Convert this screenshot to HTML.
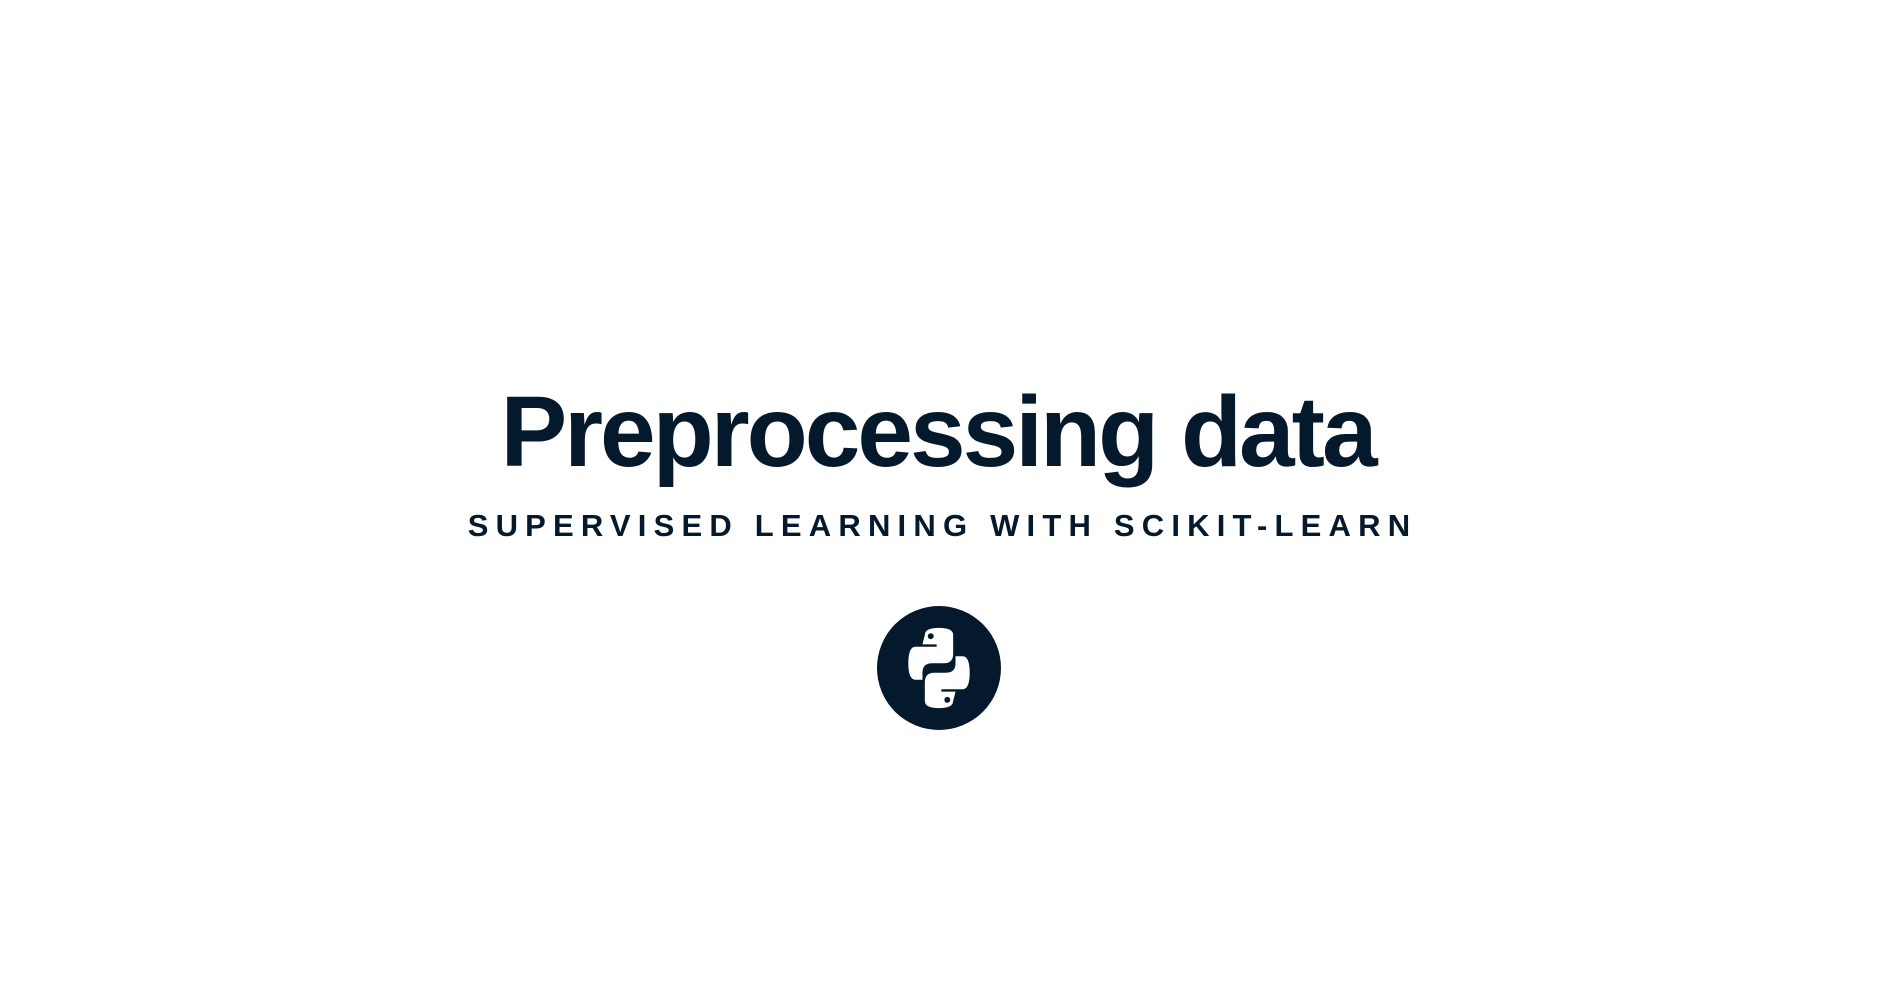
<!DOCTYPE html>
<html><head><meta charset="utf-8"><style>
html,body{margin:0;padding:0;background:#fff;width:1895px;height:999px;overflow:hidden}
.t{position:absolute;left:0;width:1895px;text-align:center;color:#05192d;font-family:"Liberation Sans",sans-serif;font-weight:bold;white-space:nowrap}
#h{top:372px;left:-10px;font-size:100px;line-height:120px;letter-spacing:-3px}
#s{top:508px;left:-5px;font-size:31px;line-height:36px;letter-spacing:7.2px}
#c{position:absolute;left:877px;top:606px;width:124px;height:124px;border-radius:50%;background:#05192d}
</style></head><body>
<div class="t" id="h">Preprocessing data</div>
<div class="t" id="s">SUPERVISED LEARNING WITH SCIKIT-LEARN</div>
<div id="c"><svg width="124" height="124" viewBox="0 0 124 124">
<g transform="translate(62 62) scale(1.18) translate(-62 -62)">
<g fill="#fff">
<path d="M50 34 q0-6 12-6 q12 0 12 6 v16 q0 8-8 8 h-10 q-8 0-8 8 v6 h-6 q-6 0-6-14 q0-14 6-14 h18 v-2 h-12 z"/>
<path d="M74 90 q0 6-12 6 q-12 0-12-6 v-16 q0-8 8-8 h10 q8 0 8-8 v-6 h6 q6 0 6 14 q0 14-6 14 h-18 v2 h12 z"/>
</g>
<circle cx="55" cy="35" r="2.5" fill="#05192d"/>
<circle cx="69" cy="89" r="2.5" fill="#05192d"/>
</g>
</svg></div>
</body></html>
